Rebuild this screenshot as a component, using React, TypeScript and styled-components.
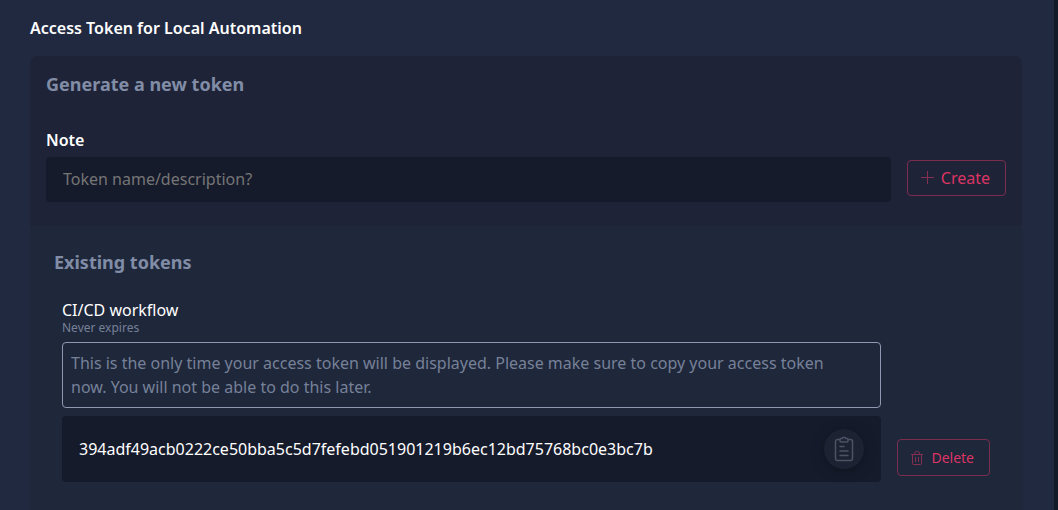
import React from "react";
import styled, { createGlobalStyle } from "styled-components";

const GlobalStyle = createGlobalStyle`
  *, *::before, *::after { box-sizing: border-box; }
  html, body, #root { height: 100%; }
  body {
    margin: 0;
    background: #151a2b;
    color: #fff;
    font: 16px/24px "Noto Sans", "Open Sans", sans-serif;
  }
  button, input { font: inherit; }
`;

const Page = styled.main`
  display: flex;
  flex-direction: column;
  min-height: 100%;
  margin-right: 4px;
  padding: 16px 32px 0 30px;
  background: #212941;
`;

const PageTitle = styled.h1`
  margin: 0 0 16px;
  font-size: 16px;
  line-height: 24px;
  font-weight: 600;
`;

const Card = styled.div`
  display: flex;
  flex: 1;
  flex-direction: column;
  border-radius: 8px 8px 0 0;
  background: #1f273b;
`;

const CreateSection = styled.section`
  padding: 16px 16px 24px;
  border-radius: 8px 8px 0 0;
  background: #1e2337;
`;

const ExistingSection = styled.section`
  padding: 24px 24px 16px;
`;

const SectionTitle = styled.h2`
  margin: 0;
  color: #818da6;
  font-size: 18px;
  line-height: 24px;
  font-weight: 700;
`;

const CreateForm = styled.form`
  display: flex;
  align-items: flex-end;
  gap: 16px;
  margin-top: 32px;
`;

const Field = styled.div`
  display: flex;
  flex: 1;
  flex-direction: column;
  gap: 5px;
`;

const Label = styled.label`
  font-weight: 600;
`;

const TextInput = styled.input`
  width: 100%;
  height: 45px;
  padding: 0 17px 2px;
  border: 0;
  border-radius: 4px;
  outline: 0;
  background: #161b2c;
  color: #fff;

  &::placeholder {
    color: #757575;
    opacity: 1;
  }
`;

const ActionButton = styled.button<{ $compact?: boolean }>`
  display: flex;
  flex: none;
  align-items: center;
  justify-content: center;
  gap: 5px;
  height: ${(p) => (p.$compact ? 37 : 36)}px;
  margin-bottom: 6px;
  padding: 0 15px 0 12px;
  border: 1px solid #7b2d50;
  border-radius: 4px;
  background: transparent;
  color: #dc3563;
  font-size: ${(p) => (p.$compact ? 14 : 16)}px;

  svg { color: #862f53; }
`;

const TokenRow = styled.article`
  display: flex;
  align-items: flex-end;
  gap: 16px;
  margin-top: 24px;
  padding: 0 8px;
`;

const TokenDetails = styled.div`
  flex: 1;
  min-width: 0;
`;

const TokenName = styled.h3`
  margin: 0;
  font-size: 16px;
  line-height: 24px;
  font-weight: 400;
`;

const Expiry = styled.p`
  margin: 0 0 8px;
  color: #768198;
  font-size: 12px;
  line-height: 12px;
`;

const Notice = styled.p`
  margin: 0 0 8px;
  padding: 8px 32px 8px 8px;
  border: 1px solid #8d99b0;
  border-radius: 4px;
  color: #768198;
`;

const TokenBox = styled.div`
  display: flex;
  align-items: center;
  justify-content: space-between;
  height: 66px;
  padding: 0 17px;
  border-radius: 4px;
  background: #161b2c;
`;

const TokenValue = styled.code`
  font-family: inherit;
  font-size: 16px;
`;

const CopyButton = styled.button`
  display: grid;
  place-items: center;
  width: 40px;
  height: 40px;
  padding: 0;
  border: 0;
  border-radius: 50%;
  background: #1d2233;
  box-shadow: 0 2px 12px #10141f;
  color: #4c5266;
`;

const PlusIcon = () => (
  <svg width="16" height="16" viewBox="0 0 16 16" fill="none" stroke="currentColor" aria-hidden="true">
    <path d="M7.5 1v13M1 7.5h13" />
  </svg>
);

const TrashIcon = () => (
  <svg width="16" height="16" viewBox="0 0 16 16" fill="none" stroke="currentColor" aria-hidden="true">
    <path d="M1 4.5h12M2.5 4.5v9a1 1 0 0 0 1 1h7a1 1 0 0 0 1-1v-9M4.500 4v-.5a2 2 0 0 1 2-2h1a2 2 0 0 1 2 2V4M5.500 7v5M8.500 7v5" />
  </svg>
);

const ClipboardIcon = () => (
  <svg width="20" height="26" viewBox="0 0 20 26" fill="none" stroke="currentColor" strokeWidth="1.5" strokeLinecap="round" strokeLinejoin="round" aria-hidden="true">
    <path d="M5.5 3.5h-2a2 2 0 0 0-2 2v17a2 2 0 0 0 2 2h13a2 2 0 0 0 2-2v-17a2 2 0 0 0-2-2h-2" />
    <path d="M7 2.5h1l.8-1h2.4l.8 1h1a1 1 0 0 1 1 1V5a1 1 0 0 1-1 1H7a1 1 0 0 1-1-1V3.500a1 1 0 0 1 1-1Z" />
    <path d="M6 10.500h4M6 15h8M6 19.500h8" />
  </svg>
);

export default function App() {
  return (
    <>
      <GlobalStyle />
      <Page>
        <PageTitle>Access Token for Local Automation</PageTitle>
        <Card>
          <CreateSection>
            <SectionTitle>Generate a new token</SectionTitle>
            <CreateForm onSubmit={(e) => e.preventDefault()}>
              <Field>
                <Label htmlFor="note">Note</Label>
                <TextInput id="note" type="text" placeholder="Token name/description?" />
              </Field>
              <ActionButton type="submit">
                <PlusIcon />
                Create
              </ActionButton>
            </CreateForm>
          </CreateSection>
          <ExistingSection>
            <SectionTitle>Existing tokens</SectionTitle>
            <TokenRow>
              <TokenDetails>
                <TokenName>CI/CD workflow</TokenName>
                <Expiry>Never expires</Expiry>
                <Notice>
                  This is the only time your access token will be displayed. Please make sure to copy your access token
                  now. You will not be able to do this later.
                </Notice>
                <TokenBox>
                  <TokenValue>394adf49acb0222ce50bba5c5d7fefebd051901219b6ec12bd75768bc0e3bc7b</TokenValue>
                  <CopyButton type="button" aria-label="Copy token">
                    <ClipboardIcon />
                  </CopyButton>
                </TokenBox>
              </TokenDetails>
              <ActionButton type="button" $compact>
                <TrashIcon />
                Delete
              </ActionButton>
            </TokenRow>
          </ExistingSection>
        </Card>
      </Page>
    </>
  );
}
